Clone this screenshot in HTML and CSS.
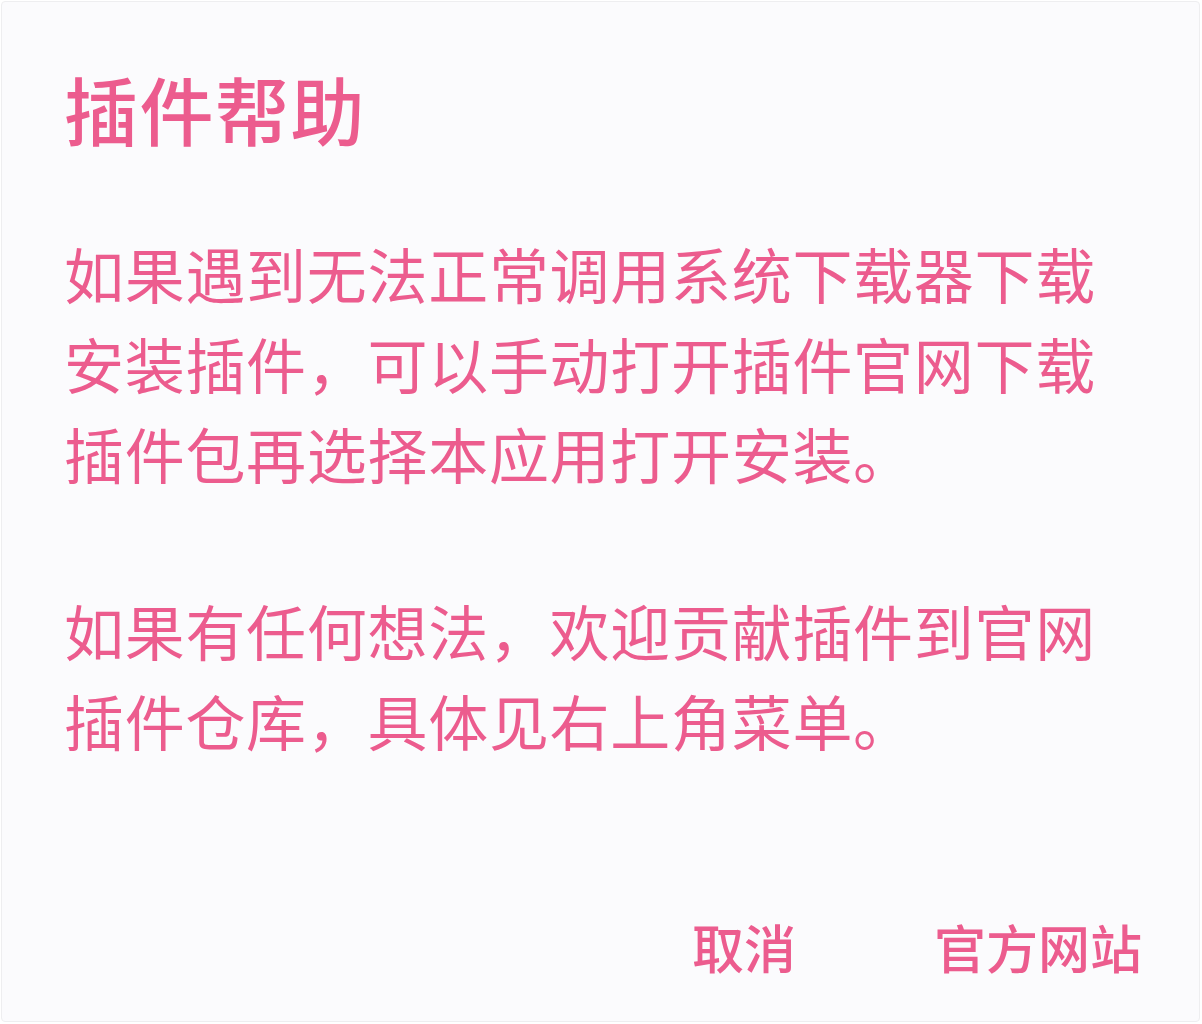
FILE: index.html
```html
<!DOCTYPE html>
<html lang="zh-CN">
<head>
<meta charset="utf-8">
<title>插件帮助</title>
<link rel="stylesheet" href="styles.css">
</head>
<body>
<div class="dialog">
  <h1 class="title">插件帮助</h1>
  <div class="content">
    <p class="para">如果遇到无法正常调用系统下载器下载安装插件，可以手动打开插件官网下载插件包再选择本应用打开安装。</p>
    <p class="para">如果有任何想法，欢迎贡献插件到官网插件仓库，具体见右上角菜单。</p>
  </div>
  <div class="actions">
    <span class="btn btn-cancel">取消</span>
    <span class="btn btn-site">官方网站</span>
  </div>
</div>
</body>
</html>
```

FILE: styles.css
```css
html, body {
  margin: 0;
  padding: 0;
  background: #ffffff;
}
body {
  font-family: "Noto Sans CJK SC", "Noto Sans", sans-serif;
  color: #ec5c8e;
}
.dialog {
  box-sizing: border-box;
  background: #fbfbfd;
  border: 1px solid #eeeef0;
  border-radius: 4px;
  margin: 1px 0 0 1px;
  width: 1199px;
  height: 1021px;
  padding: 56px 0 0 62px;
  display: flex;
  flex-direction: column;
}
.title {
  margin: 0;
  font-size: 74px;
  line-height: 100px;
  font-weight: 500;
  letter-spacing: 1.5px;
}
.content {
  margin-top: 70px;
  width: 1050px;
}
.para {
  margin: 0 0 87px 0;
  font-size: 60px;
  line-height: 90px;
  letter-spacing: 0.7px;
  font-weight: 400;
}
.actions {
  margin-top: auto;
  margin-bottom: 34px;
  display: flex;
  justify-content: flex-end;
  gap: 138px;
  padding-right: 57px;
}
.btn {
  font-size: 52px;
  line-height: 80px;
  font-weight: 500;
}
```
